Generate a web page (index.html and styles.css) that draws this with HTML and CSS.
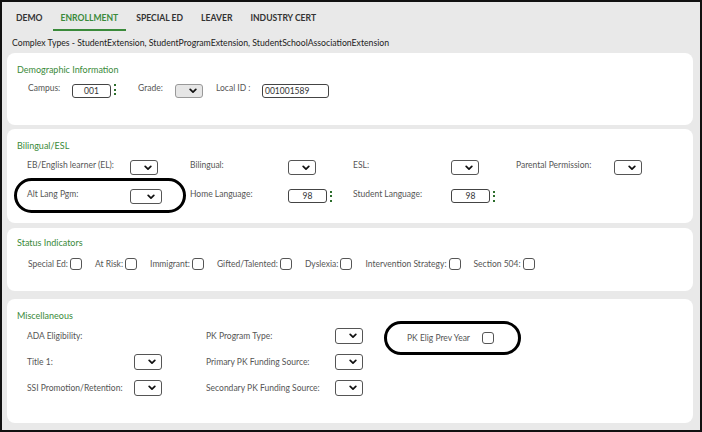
FILE: index.html
```html
<!DOCTYPE html>
<html>
<head>
<meta charset="utf-8">
<link rel="stylesheet" href="styles.css">
</head>
<body>
<div class="frame">
  <nav class="tabs">
    <span class="tab">DEMO</span>
    <span class="tab active">ENROLLMENT</span>
    <span class="tab">SPECIAL ED</span>
    <span class="tab">LEAVER</span>
    <span class="tab">INDUSTRY CERT</span>
  </nav>
  <div class="subtitle">Complex Types - StudentExtension, StudentProgramExtension, StudentSchoolAssociationExtension</div>

  <section class="panel p-demo">
    <h2 class="ptitle">Demographic Information</h2>
    <div class="demo-row">
      <span class="lbl w-campus">Campus:</span>
      <span class="inp inp-campus">001</span>
      <span class="dots"><i></i><i></i><i></i></span>
      <span class="lbl w-grade">Grade:</span>
      <span class="sel sel-off"><svg class="chev" viewBox="0 0 8 6"><path d="M1.2 1.4 L4 4.2 L6.8 1.4"/></svg></span>
      <span class="lbl w-local">Local ID :</span>
      <span class="inp inp-local">001001589</span>
    </div>
  </section>

  <section class="panel p-bil">
    <h2 class="ptitle">Bilingual/ESL</h2>
    <div class="bil-grid">
      <span class="lbl">EB/English learner (EL):</span>
      <span class="sel"><svg class="chev" viewBox="0 0 8 6"><path d="M1.2 1.4 L4 4.2 L6.8 1.4"/></svg></span>
      <span class="lbl">Bilingual:</span>
      <span class="sel"><svg class="chev" viewBox="0 0 8 6"><path d="M1.2 1.4 L4 4.2 L6.8 1.4"/></svg></span>
      <span class="lbl">ESL:</span>
      <span class="sel"><svg class="chev" viewBox="0 0 8 6"><path d="M1.2 1.4 L4 4.2 L6.8 1.4"/></svg></span>
      <span class="lbl">Parental Permission:</span>
      <span class="sel"><svg class="chev" viewBox="0 0 8 6"><path d="M1.2 1.4 L4 4.2 L6.8 1.4"/></svg></span>

      <span class="lbl">Alt Lang Pgm:</span>
      <span class="sel sel-wide"><svg class="chev" viewBox="0 0 8 6"><path d="M1.2 1.4 L4 4.2 L6.8 1.4"/></svg></span>
      <span class="lbl">Home Language:</span>
      <span class="inpwrap"><span class="inp inp-lang">98</span><span class="dots"><i></i><i></i><i></i></span></span>
      <span class="lbl">Student Language:</span>
      <span class="inpwrap"><span class="inp inp-lang">98</span><span class="dots"><i></i><i></i><i></i></span></span>
    </div>
    <div class="oval oval-alt"></div>
  </section>

  <section class="panel p-status">
    <h2 class="ptitle">Status Indicators</h2>
    <div class="status-row">
      <span class="chk-item"><span class="lbl">Special Ed:</span><span class="cb"></span></span>
      <span class="chk-item"><span class="lbl">At Risk:</span><span class="cb"></span></span>
      <span class="chk-item"><span class="lbl">Immigrant:</span><span class="cb"></span></span>
      <span class="chk-item"><span class="lbl">Gifted/Talented:</span><span class="cb"></span></span>
      <span class="chk-item"><span class="lbl">Dyslexia:</span><span class="cb"></span></span>
      <span class="chk-item"><span class="lbl">Intervention Strategy:</span><span class="cb"></span></span>
      <span class="chk-item"><span class="lbl">Section 504:</span><span class="cb"></span></span>
    </div>
  </section>

  <section class="panel p-misc">
    <h2 class="ptitle">Miscellaneous</h2>
    <div class="misc-grid">
      <span class="lbl">ADA Eligibility:</span>
      <span></span>
      <span></span>
      <span class="lbl">PK Program Type:</span>
      <span class="sel"><svg class="chev" viewBox="0 0 8 6"><path d="M1.2 1.4 L4 4.2 L6.8 1.4"/></svg></span>
      <span class="oval-item"><span class="lbl">PK Elig Prev Year</span><span class="cb"></span></span>

      <span class="lbl">Title 1:</span>
      <span class="sel"><svg class="chev" viewBox="0 0 8 6"><path d="M1.2 1.4 L4 4.2 L6.8 1.4"/></svg></span>
      <span></span>
      <span class="lbl">Primary PK Funding Source:</span>
      <span class="sel"><svg class="chev" viewBox="0 0 8 6"><path d="M1.2 1.4 L4 4.2 L6.8 1.4"/></svg></span>
      <span></span>

      <span class="lbl">SSI Promotion/Retention:</span>
      <span class="sel"><svg class="chev" viewBox="0 0 8 6"><path d="M1.2 1.4 L4 4.2 L6.8 1.4"/></svg></span>
      <span></span>
      <span class="lbl">Secondary PK Funding Source:</span>
      <span class="sel"><svg class="chev" viewBox="0 0 8 6"><path d="M1.2 1.4 L4 4.2 L6.8 1.4"/></svg></span>
      <span></span>
    </div>
  </section>
</div>
</body>
</html>
```

FILE: styles.css
```css
* { box-sizing: border-box; margin: 0; padding: 0; }
html, body { width: 702px; height: 432px; overflow: hidden; }
body { background: #e8e8e8; font-family: Lato, "Open Sans", sans-serif; color: #555; }

.frame {
  width: 702px;
  height: 432px;
  border: 2px solid #111;
  background: #e9e9e9;
  padding: 0 7px 0 5px;
}

.tabs { display: flex; gap: 2px; padding-left: 1px; }
.tab {
  padding: 10px 8px 5px;
  line-height: 12px;
  font-size: 8.6px;
  font-weight: 700;
  color: #333;
  border-bottom: 2px solid transparent;
}
.tab.active { color: #3a8a3a; border-bottom-color: #3a8a3a; }

.subtitle {
  margin-top: 6px;
  padding-left: 5px;
  line-height: 12px;
  font-size: 8.7px;
  color: #222;
}

.panel {
  position: relative;
  background: #fff;
  border-radius: 8px;
  padding: 10px 10px 0;
}
.p-demo { margin-top: 4px; height: 72px; }
.p-bil { margin-top: 4px; height: 94px; }
.p-status { margin-top: 5px; height: 63px; padding-top: 8px; }
.p-misc { margin-top: 8px; height: 124px; }

.ptitle {
  font-size: 9px;
  font-weight: 400;
  line-height: 14px;
  color: #3a8a3a;
}

.lbl { font-size: 8.5px; line-height: 12px; color: #555; white-space: nowrap; }

.inp {
  display: flex;
  align-items: center;
  height: 14px;
  border: 1px solid #444;
  border-radius: 3px;
  background: #fff;
  font-size: 8.5px;
  color: #333;
}
.inp-campus { width: 39px; justify-content: center; }
.inp-local { width: 67px; padding-left: 2px; }
.inp-lang { width: 39px; justify-content: center; }

.sel {
  display: flex;
  align-items: center;
  justify-content: flex-end;
  width: 28px;
  height: 15px;
  padding-right: 5px;
  border: 1px solid #555;
  border-radius: 3px;
  background: #fff;
}
.sel-wide { width: 32px; padding-right: 6px; }
.sel-off { background: #e6e6e6; border-color: #999; height: 14px; }
.chev { width: 8px; height: 6px; fill: none; stroke: #111; stroke-width: 1.7; stroke-linecap: round; stroke-linejoin: round; }

.dots { display: flex; flex-direction: column; justify-content: space-between; height: 11px; margin-left: 3px; }
.dots i { display: block; width: 2px; height: 2px; background: #2d6e2d; }

.demo-row { display: flex; align-items: flex-start; margin-top: 7px; padding-left: 11px; }
.demo-row .lbl { margin-top: -2px; }
.w-campus { width: 44px; }
.w-grade { width: 37px; margin-left: 22px; }
.w-local { width: 46px; margin-left: 13px; }

.bil-grid {
  display: grid;
  grid-template-columns: 103px 60px 98px 65px 98px 65px 98px auto;
  row-gap: 14px;
  margin-top: 7px;
  padding-left: 10px;
  align-items: start;
}
.bil-grid .lbl { line-height: 10px; }
.inpwrap { display: flex; align-items: center; }

.oval {
  position: absolute;
  border: 3px solid #000;
  border-radius: 18px;
}
.oval-alt { left: 7px; top: 49px; width: 172px; height: 35px; }

.status-row { display: flex; align-items: center; margin-top: 8px; padding-left: 11px; }
.chk-item { display: flex; align-items: center; gap: 2px; margin-right: 13px; }
.cb {
  display: block;
  width: 12px;
  height: 12px;
  border: 1px solid #555;
  border-radius: 3px;
  background: #fff;
}

.misc-grid {
  display: grid;
  grid-template-columns: 107px 28px 44px 129px 28px auto;
  grid-template-rows: 16px 16px 16px;
  row-gap: 10px;
  margin-top: 5px;
  padding-left: 10px;
  align-items: center;
}
.misc-grid .sel { height: 16px; }
.oval-item {
  display: flex;
  align-items: center;
  justify-self: start;
  gap: 12px;
  width: 137px;
  height: 34px;
  margin: -7px 0 -11px 21px;
  padding-left: 20px;
  border: 3px solid #000;
  border-radius: 18px;
}
```
